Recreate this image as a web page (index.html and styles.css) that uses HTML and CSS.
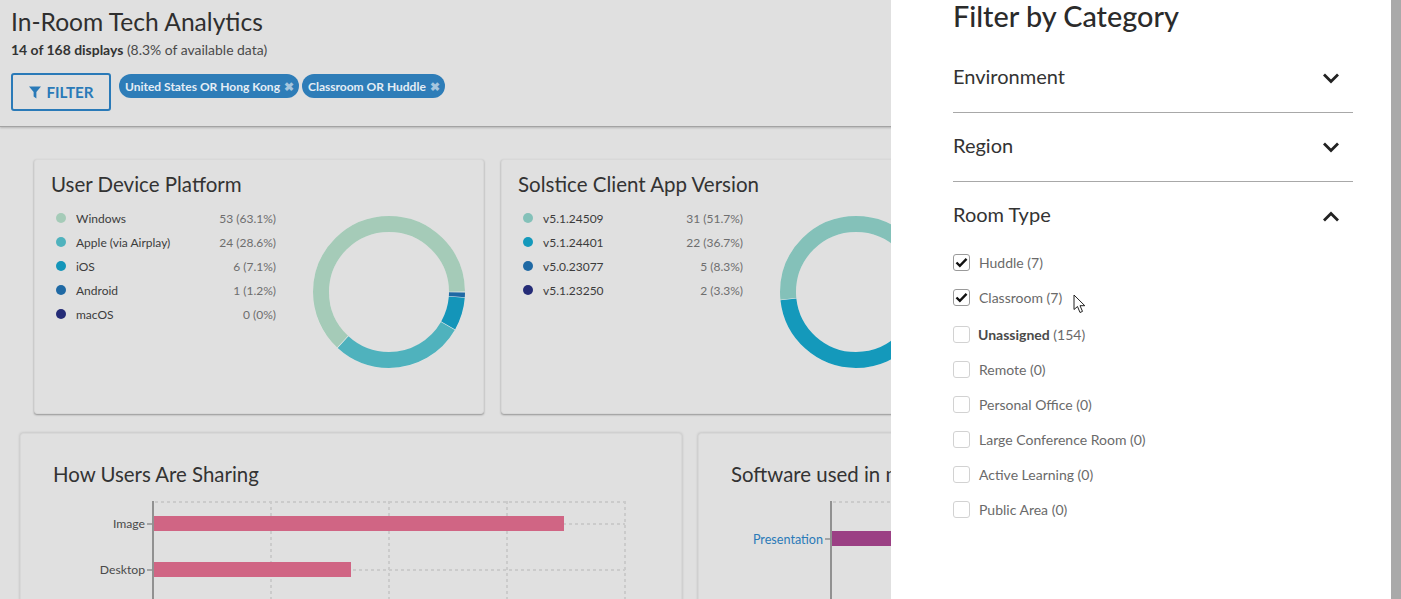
FILE: index.html

```html
<!DOCTYPE html>
<html lang="en">
<head>
  <meta charset="UTF-8" />
  <meta name="viewport" content="width=device-width, initial-scale=1.0" />
  <title>In-Room Tech Analytics</title>
  <link rel="stylesheet" href="styles.css">
</head>
<body>
  <div class="pagina">
    <header class="cabecera">
      <h1>In-Room Tech Analytics</h1>
      <p class="resumen"><strong>14 of 168 displays</strong> (8.3% of available data)</p>
      <div class="acciones">
        <button class="btn-filtro">
          <svg class="icono-embudo" viewBox="0 0 13 13"><path d="M0 0H13L8 6V13L5 10.8V6Z"/></svg>
          FILTER
        </button>
        <div class="chips">
          <span class="chip">United States OR Hong Kong <i class="chip-x">&#10006;</i></span>
          <span class="chip">Classroom OR Huddle <i class="chip-x">&#10006;</i></span>
        </div>
      </div>
    </header>

    <main class="contenido">
      <div class="fila-donas">
        <section class="tarjeta tarjeta-dona">
          <h2>User Device Platform</h2>
          <div class="dona-cuerpo">
            <ul class="leyenda">
              <li><span class="punto c-windows"></span><span class="nombre">Windows</span><span class="valor">53 (63.1%)</span></li>
              <li><span class="punto c-apple"></span><span class="nombre">Apple (via Airplay)</span><span class="valor">24 (28.6%)</span></li>
              <li><span class="punto c-ios"></span><span class="nombre">iOS</span><span class="valor">6 (7.1%)</span></li>
              <li><span class="punto c-android"></span><span class="nombre">Android</span><span class="valor">1 (1.2%)</span></li>
              <li><span class="punto c-macos"></span><span class="nombre">macOS</span><span class="valor">0 (0%)</span></li>
            </ul>
            <svg class="dona" viewBox="0 0 152 152">
              <circle class="aro" cx="76" cy="76" r="68" />
              <circle class="arco" cx="76" cy="76" r="68" pathLength="100" stroke="#1f69a4" stroke-dasharray="1.0 99" stroke-dashoffset="-0.1" />
              <circle class="arco" cx="76" cy="76" r="68" pathLength="100" stroke="#1495b9" stroke-dasharray="6.95 93.05" stroke-dashoffset="-1.25" />
              <circle class="arco" cx="76" cy="76" r="68" pathLength="100" stroke="#4fb2bd" stroke-dasharray="28.45 71.55" stroke-dashoffset="-8.35" />
              <circle class="arco" cx="76" cy="76" r="68" pathLength="100" stroke="#a5cbb8" stroke-dasharray="62.95 37.05" stroke-dashoffset="-36.95" />
            </svg>
          </div>
        </section>

        <section class="tarjeta tarjeta-dona">
          <h2>Solstice Client App Version</h2>
          <div class="dona-cuerpo">
            <ul class="leyenda">
              <li><span class="punto c-v1"></span><span class="nombre">v5.1.24509</span><span class="valor">31 (51.7%)</span></li>
              <li><span class="punto c-v2"></span><span class="nombre">v5.1.24401</span><span class="valor">22 (36.7%)</span></li>
              <li><span class="punto c-android"></span><span class="nombre">v5.0.23077</span><span class="valor">5 (8.3%)</span></li>
              <li><span class="punto c-macos"></span><span class="nombre">v5.1.23250</span><span class="valor">2 (3.3%)</span></li>
            </ul>
            <svg class="dona" viewBox="0 0 152 152">
              <circle class="aro" cx="76" cy="76" r="68" />
              <circle class="arco" cx="76" cy="76" r="68" pathLength="100" stroke="#252c77" stroke-dasharray="3.2 96.8" stroke-dashoffset="-0.05" />
              <circle class="arco" cx="76" cy="76" r="68" pathLength="100" stroke="#1f69a4" stroke-dasharray="8.2 91.8" stroke-dashoffset="-3.35" />
              <circle class="arco" cx="76" cy="76" r="68" pathLength="100" stroke="#1499bb" stroke-dasharray="36.6 63.4" stroke-dashoffset="-11.65" />
              <circle class="arco" cx="76" cy="76" r="68" pathLength="100" stroke="#84c1b9" stroke-dasharray="51.6 48.4" stroke-dashoffset="-48.35" />
            </svg>
          </div>
        </section>
      </div>

      <div class="fila-barras">
        <section class="tarjeta tarjeta-barras">
          <h2>How Users Are Sharing</h2>
          <svg class="grafico" width="640" height="140">
            <g class="rejilla">
              <path d="M134 1H604M134 23H604M134 69H604" />
              <path d="M250 0V140M368 0V140M486 0V140M604 0V140" />
            </g>
            <path class="eje" d="M132 0V140" />
            <path class="marca" d="M126 23H131M126 69H131" />
            <rect class="barra-rosa" x="133" y="15" width="410" height="15" />
            <rect class="barra-rosa" x="133" y="61" width="197" height="15" />
            <text class="etiqueta" x="124" y="27" text-anchor="end">Image</text>
            <text class="etiqueta" x="124" y="73" text-anchor="end">Desktop</text>
          </svg>
        </section>

        <section class="tarjeta tarjeta-barras">
          <h2>Software used in meetings</h2>
          <svg class="grafico" width="640" height="140">
            <g class="rejilla">
              <path d="M134 1H604" />
            </g>
            <path class="eje" d="M132 0V140" />
            <path class="marca" d="M126 38H131" />
            <rect class="barra-morada" x="133" y="30" width="300" height="15" />
            <text class="etiqueta etiqueta-azul" x="124" y="43" text-anchor="end">Presentation</text>
          </svg>
        </section>
      </div>
    </main>

    <aside class="cajon">
      <h3>Filter by Category</h3>
      <div class="seccion">
        <span>Environment</span>
        <svg class="chevron" viewBox="0 0 18 12"><path d="M2 2.5L9 9.5L16 2.5"/></svg>
      </div>
      <div class="seccion">
        <span>Region</span>
        <svg class="chevron" viewBox="0 0 18 12"><path d="M2 2.5L9 9.5L16 2.5"/></svg>
      </div>
      <div class="seccion seccion-abierta">
        <span>Room Type</span>
        <svg class="chevron" viewBox="0 0 18 12"><path d="M2 9.5L9 2.5L16 9.5"/></svg>
      </div>
      <ul class="opciones">
        <li><span class="caja marcada"><svg viewBox="0 0 14 12"><path d="M1.5 6L5.2 9.6L12.5 2"/></svg></span>Huddle (7)</li>
        <li><span class="caja marcada"><svg viewBox="0 0 14 12"><path d="M1.5 6L5.2 9.6L12.5 2"/></svg></span>Classroom (7)</li>
        <li><span class="caja"></span><span class="con-fuerte"><strong>Unassigned</strong> (154)</span></li>
        <li><span class="caja"></span>Remote (0)</li>
        <li><span class="caja"></span>Personal Office (0)</li>
        <li><span class="caja"></span>Large Conference Room (0)</li>
        <li><span class="caja"></span>Active Learning (0)</li>
        <li><span class="caja"></span>Public Area (0)</li>
      </ul>
    </aside>
    <div class="barra-scroll"></div>

    <svg class="cursor" viewBox="0 0 14 20" width="14" height="20"><path d="M1 1V15.5L4.5 12.5L7 18.5L9.5 17.4L7 11.7H11.8Z"/></svg>
  </div>
</body>
</html>
```

FILE: styles.css

```css
* {
  box-sizing: border-box;
}
html, body {
  margin: 0;
  height: 100%;
  overflow: hidden;
}
body {
  font-family: 'Lato', 'Open Sans', sans-serif;
  color: #333;
  background: #e0e0e0;
}
.pagina {
  position: relative;
  height: 599px;
  overflow: hidden;
}

/* cabecera */
.cabecera {
  height: 127px;
  padding: 7px 11px 0;
  border-bottom: 1px solid #a3a3a3;
  box-shadow: 0 1px 2px rgba(0,0,0,0.2);
}
h1 {
  margin: 0;
  font-size: 24.6px;
  line-height: 30px;
  font-weight: 400;
  color: #2f2f2f;
}
.resumen {
  margin: 4px 0 0;
  font-size: 13.95px;
  line-height: 18px;
  color: #4a4a4a;
}
.resumen strong {
  font-weight: 700;
  color: #333;
}
.acciones {
  display: flex;
  align-items: flex-start;
  gap: 8px;
  margin-top: 14px;
}
.btn-filtro {
  display: flex;
  align-items: center;
  justify-content: center;
  gap: 5px;
  width: 100px;
  height: 38px;
  padding: 0 0 0 1px;
  font-family: inherit;
  font-size: 15.2px;
  font-weight: 700;
  color: #2a7ab8;
  background: transparent;
  border: 2px solid #2a7ab8;
  border-radius: 3px;
}
.icono-embudo {
  width: 12px;
  height: 13px;
  fill: #2a7ab8;
}
.chips {
  display: flex;
  gap: 3px;
  margin-top: 1px;
}
.chip {
  display: flex;
  align-items: center;
  gap: 4px;
  height: 24px;
  padding: 0 5px 0 6px;
  font-size: 12px;
  font-weight: 700;
  color: #e4edf5;
  background: #2e7db8;
  border-radius: 12px;
}
.chip-x {
  font-style: normal;
  font-size: 12px;
  color: #a5c6de;
}

/* tarjetas */
.contenido {
  padding: 32px 0 0 20px;
}
.tarjeta {
  flex: none;
  background: #e0e0e0;
  border: 1px solid #d8d8d8;
  border-radius: 3px;
  box-shadow: 0 1px 2px rgba(0,0,0,0.35);
}
.tarjeta h2 {
  margin: 0;
  font-size: 20.5px;
  font-weight: 400;
  line-height: 26px;
  color: #333;
}
.fila-donas {
  display: flex;
  gap: 17px;
  padding-left: 14px;
}
.tarjeta-dona {
  width: 450px;
  height: 255px;
  padding: 11px 16px;
}
.dona-cuerpo {
  display: flex;
  margin-top: 6px;
}
.leyenda {
  list-style: none;
  margin: 3px 0 0;
  padding: 0;
  width: 225px;
  font-size: 12px;
}
.leyenda li {
  display: flex;
  align-items: center;
  height: 24px;
}
.punto {
  flex: none;
  width: 10px;
  height: 10px;
  margin: 0 10px 0 5px;
  border-radius: 50%;
}
.nombre {
  flex: 1;
  color: #3c3c3c;
}
.valor {
  color: #6e6e6e;
}
.c-windows { background: #a5cbb8; }
.c-apple { background: #4fb2bd; }
.c-ios { background: #1495b9; }
.c-android { background: #1f69a4; }
.c-macos { background: #252c77; }
.c-v1 { background: #84c1b9; }
.c-v2 { background: #1499bb; }
.dona {
  flex: none;
  width: 152px;
  height: 152px;
  margin: 13px 0 0 36.5px;
}
.aro {
  fill: none;
  stroke: #ececec;
  stroke-width: 16;
}
.arco {
  fill: none;
  stroke-width: 16;
}
.fila-barras {
  display: flex;
  gap: 16px;
  margin-top: 19px;
}
.tarjeta-barras {
  width: 662px;
  height: 260px;
  padding: 26px 0 0 32px;
  box-shadow: 0 0 3px rgba(0,0,0,0.2);
}
.tarjeta-barras h2 {
  line-height: 28px;
  font-size: 20.4px;
}
.grafico {
  display: block;
  margin: 13px 0 0 -32px;
}
.rejilla path {
  fill: none;
  stroke: #cbcbcb;
  stroke-width: 2;
  stroke-dasharray: 3 3;
}
.eje {
  fill: none;
  stroke: #919191;
  stroke-width: 2;
}
.marca {
  fill: none;
  stroke: #919191;
  stroke-width: 1.5;
}
.barra-rosa { fill: #d06584; }
.barra-morada { fill: #9b4084; }
.etiqueta {
  font-size: 12.2px;
  fill: #4a4a4a;
}
.etiqueta-azul {
  font-size: 12.6px;
  fill: #2a7ab8;
}

/* cajon de filtros, va encima de la pagina */
.cajon {
  position: absolute;
  top: 0;
  right: 10px;
  bottom: 0;
  width: 500px;
  padding: 0 38px 0 62px;
  background: #fff;
}
.cajon h3 {
  margin: -1px 0 11px;
  font-size: 28.8px;
  line-height: 34px;
  font-weight: 500;
  color: #2b2b2b;
}
.seccion {
  display: flex;
  justify-content: space-between;
  align-items: center;
  height: 69px;
  padding: 0 13px 4px 0;
  font-size: 20px;
  color: #333;
  border-bottom: 1px solid #a8a8a8;
}
.seccion-abierta {
  border-bottom: 0;
  margin-bottom: -6px;
  padding-bottom: 6px;
}
.chevron {
  flex: none;
  width: 18px;
  height: 12px;
  margin-top: 4px;
  fill: none;
  stroke: #222;
  stroke-width: 2.8;
}
.seccion-abierta .chevron {
  margin-top: 6px;
}
.opciones {
  list-style: none;
  margin: 0;
  padding: 0;
  font-size: 14px;
  color: #6a6a6a;
}
.opciones li {
  display: flex;
  align-items: center;
  gap: 9px;
  height: 35px;
}
.opciones li:nth-child(2) {
  margin-bottom: 2px;
}
.con-fuerte {
  margin-left: -1px;
}
.opciones strong {
  font-weight: 700;
  color: #4a4a4a;
}
.caja {
  flex: none;
  display: flex;
  align-items: center;
  justify-content: center;
  width: 17px;
  height: 17px;
  border: 1px solid #d2d2d2;
  border-radius: 3px;
}
.caja.marcada {
  border-color: #9a9a9a;
}
.caja svg {
  width: 13px;
  height: 11px;
  fill: none;
  stroke: #111;
  stroke-width: 2.6;
}
.barra-scroll {
  position: absolute;
  top: 0;
  right: 0;
  bottom: 0;
  width: 10px;
  background: #a9a9a9;
}
.cursor {
  position: absolute;
  left: 1073px;
  top: 294px;
  fill: #fff;
  stroke: #222;
  stroke-width: 1;
}
```
